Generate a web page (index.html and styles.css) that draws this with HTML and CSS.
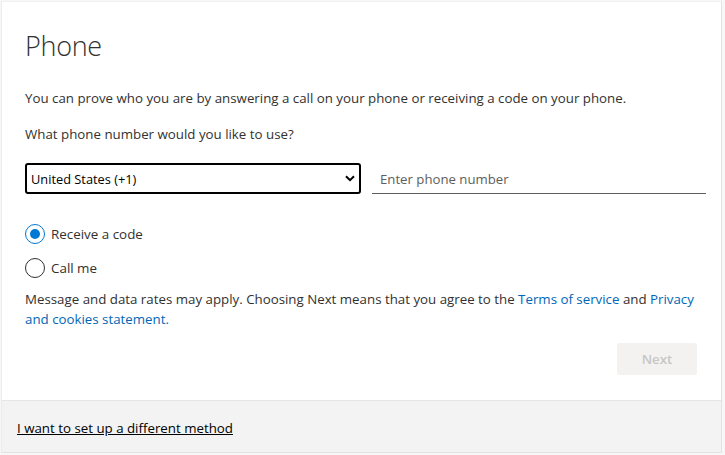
FILE: index.html
```html
<!DOCTYPE html>
<html lang="en">
<head>
<meta charset="utf-8">
<title>Phone</title>
<link rel="stylesheet" href="styles.css">
</head>
<body>
<div class="card">
  <div class="content">
    <h1 class="title">Phone</h1>
    <p class="text intro">You can prove who you are by answering a call on your phone or receiving a code on your phone.</p>
    <p class="text question">What phone number would you like to use?</p>
    <div class="phone-row">
      <div class="select">
        <span class="select-value">United States (+1)</span>
        <svg class="chevron" width="10" height="7" viewBox="0 0 10 7"><path d="M1 1.2 L5 5.2 L9 1.2" fill="none" stroke="#000" stroke-width="2"/></svg>
      </div>
      <div class="input">
        <span class="placeholder">Enter phone number</span>
      </div>
    </div>
    <div class="radios">
      <label class="radio-row">
        <span class="radio checked"><span class="dot"></span></span>
        <span class="radio-label">Receive a code</span>
      </label>
      <label class="radio-row">
        <span class="radio"></span>
        <span class="radio-label">Call me</span>
      </label>
    </div>
    <p class="text legal">Message and data rates may apply. Choosing Next means that you agree to the <a class="link">Terms of service</a> and <a class="link">Privacy and cookies statement.</a></p>
    <div class="actions">
      <button class="next">Next</button>
    </div>
  </div>
  <div class="footer">
    <a class="footer-link">I want to set up a different method</a>
  </div>
</div>
</body>
</html>
```
FILE: styles.css
```css
html, body {
  margin: 0;
  padding: 0;
  background: #f7f7f7;
  font-family: "Open Sans", "Noto Sans", sans-serif;
  color: #323130;
}
.card {
  margin: 1px 0 0 1px;
  width: 719px;
  height: 450px;
  background: #fff;
  border: 1px solid #e3e3e3;
  border-top-color: #f0f0f0;
  border-left-color: #ececec;
  display: flex;
  flex-direction: column;
}
.content {
  flex: 1;
  padding: 0 15px 0 23px;
}
.title {
  margin: 26px 0 0 0;
  font-size: 27px;
  font-weight: 300;
  line-height: 36px;
  color: #323130;
  letter-spacing: -0.3px;
}
.text {
  margin: 0;
  font-size: 13.3px;
  line-height: 20px;
  color: #323130;
}
.intro { margin-top: 24px; }
.question { margin-top: 16px; }
.phone-row {
  display: flex;
  margin-top: 19px;
  gap: 11px;
  align-items: flex-start;
}
.select {
  box-sizing: border-box;
  flex: 0 0 336px;
  height: 31px;
  border: 2px solid #000;
  border-radius: 3px;
  display: flex;
  align-items: center;
  justify-content: space-between;
  padding: 0 4px 0 4px;
  font-size: 12.8px;
  color: #000;
}
.input {
  box-sizing: border-box;
  flex: 1;
  height: 31px;
  border-bottom: 1px solid #605e5c;
  display: flex;
  align-items: center;
  padding-left: 8px;
  padding-top: 1px;
}
.placeholder {
  font-size: 13.2px;
  color: #605e5c;
}
.radios {
  margin-top: 30px;
  display: flex;
  flex-direction: column;
  gap: 14px;
}
.radio-row {
  display: flex;
  align-items: center;
  gap: 6px;
  height: 20px;
}
.radio {
  box-sizing: border-box;
  width: 20px;
  height: 20px;
  border-radius: 50%;
  border: 1px solid #323130;
  display: flex;
  align-items: center;
  justify-content: center;
}
.radio.checked { border-color: #0078d4; }
.dot {
  width: 10px;
  height: 10px;
  border-radius: 50%;
  background: #0078d4;
}
.radio-label {
  font-size: 13.4px;
  color: #323130;
}
.legal { margin-top: 11px; }
.link { color: #0067b8; text-decoration: none; }
.actions {
  display: flex;
  justify-content: flex-end;
  margin-top: 14px;
  padding-right: 9px;
}
.next {
  width: 80px;
  height: 32px;
  border: none;
  border-radius: 2px;
  background: #f3f2f1;
  color: #c8c6c4;
  font-family: "Open Sans", "Noto Sans", sans-serif;
  font-size: 13.3px;
  font-weight: 600;
}
.footer {
  height: 51px;
  background: #f3f3f3;
  border-top: 1px solid #e6e6e6;
  display: flex;
  align-items: center;
  padding-left: 15px;
}
.footer-link {
  font-size: 13.3px;
  color: #000;
  text-decoration: underline;
  padding-top: 2px;
}
```
